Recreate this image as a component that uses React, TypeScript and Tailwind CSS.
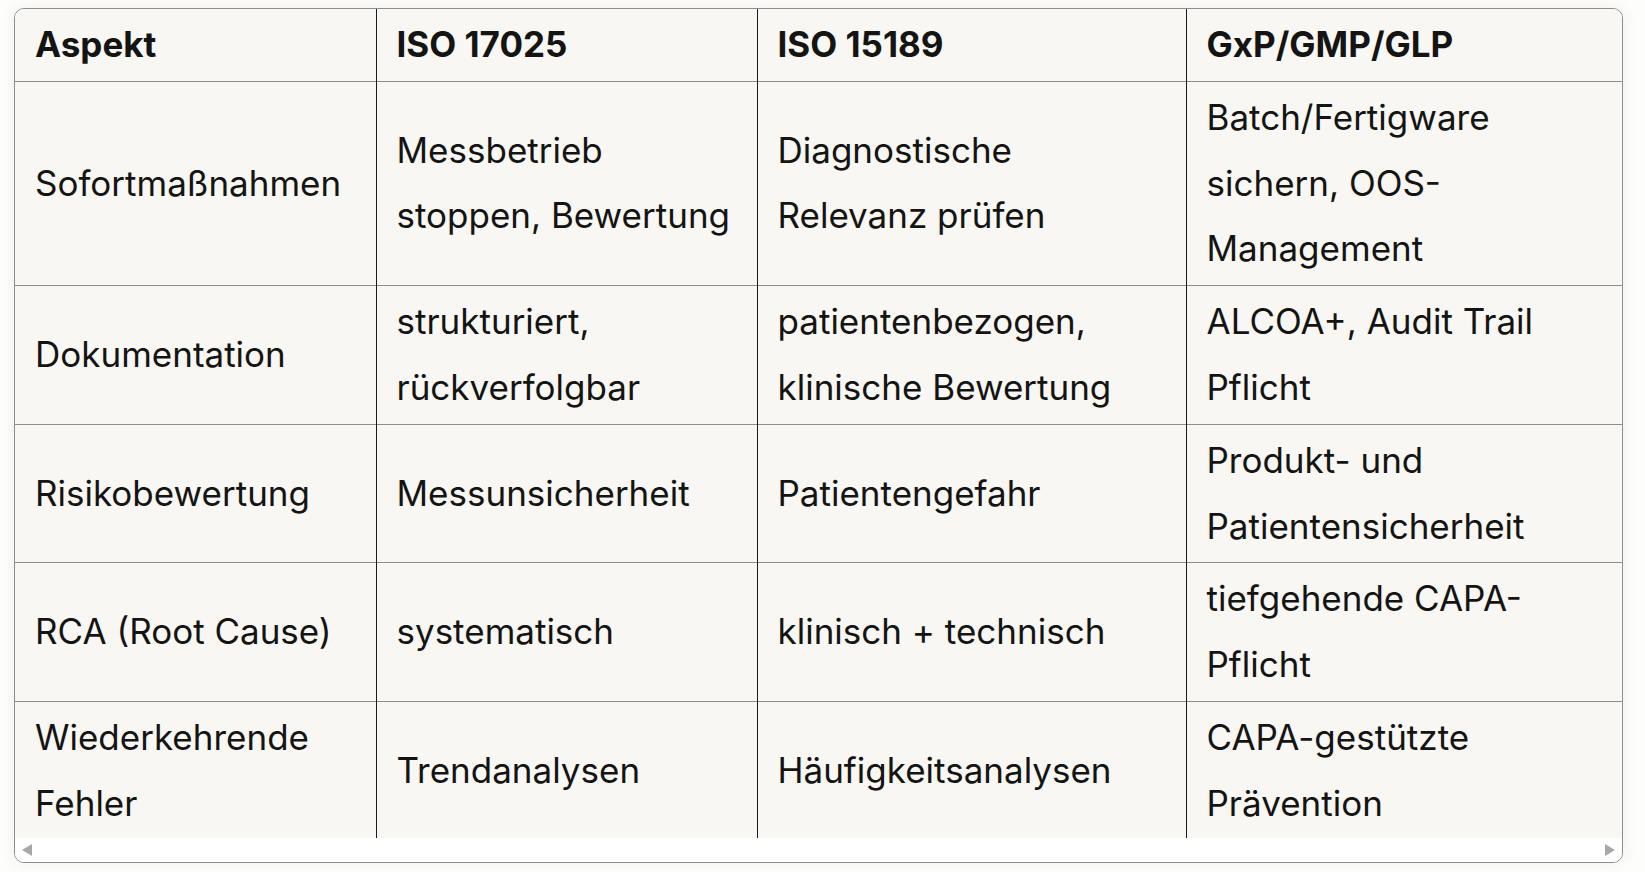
const rows: string[][] = [
  ["Sofortmaßnahmen", "Messbetrieb stoppen, Bewertung", "Diagnostische Relevanz prüfen", "Batch/Fertigware sichern, OOS-Management"],
  ["Dokumentation", "strukturiert, rückverfolgbar", "patientenbezogen, klinische Bewertung", "ALCOA+, Audit Trail Pflicht"],
  ["Risikobewertung", "Messunsicherheit", "Patientengefahr", "Produkt- und Patientensicherheit"],
  ["RCA (Root Cause)", "systematisch", "klinisch + technisch", "tiefgehende CAPA-Pflicht"],
  ["Wiederkehrende Fehler", "Trendanalysen", "Häufigkeitsanalysen", "CAPA-gestützte Prävention"],
];

const headers = ["Aspekt", "ISO 17025", "ISO 15189", "GxP/GMP/GLP"];

export default function App() {
  return (
    <div className="w-[1645px] h-[872px] bg-[#fdfdfc] pt-[8px] pl-[14px]" style={{ fontFamily: "Inter, 'Noto Sans', sans-serif" }}>
      <div className="w-[1609px] h-[855px] flex flex-col rounded-[10px] border border-[#8e8e8e] overflow-hidden bg-white shadow-[0_0_18px_rgba(0,0,0,0.06)]">
        <div className="h-[829px] overflow-hidden bg-[#f8f7f3]">
          <table className="w-full border-collapse table-fixed text-[35px] leading-[65.8px] text-[#141413]">
            <colgroup>
              <col className="w-[361px]" />
              <col className="w-[381px]" />
              <col className="w-[429px]" />
              <col />
            </colgroup>
            <thead>
              <tr className="border-b border-[#8e8e8e]">
                {headers.map((h, i) => (
                  <th
                    key={h}
                    className={`text-left font-bold px-[20px] py-[3px] ${i > 0 ? "border-l border-[#1c1c1c]" : ""}`}
                  >
                    {h}
                  </th>
                ))}
              </tr>
            </thead>
            <tbody>
              {rows.map((r) => (
                <tr key={r[0]} className="border-b border-[#8e8e8e]">
                  {r.map((c, i) => (
                    <td
                      key={i}
                      className={`align-middle px-[20px] py-[3px] ${i > 0 ? "border-l border-[#1c1c1c]" : ""}`}
                    >
                      {c}
                    </td>
                  ))}
                </tr>
              ))}
            </tbody>
          </table>
        </div>
        {/* horizontal scrollbar */}
        <div className="flex-1 flex items-center justify-between px-[6px] bg-white">
          <svg width="12" height="14" viewBox="0 0 12 14">
            <polygon points="11,1 11,13 1,7" fill="#a8a8a8" />
          </svg>
          <svg width="12" height="14" viewBox="0 0 12 14">
            <polygon points="1,1 1,13 11,7" fill="#a8a8a8" />
          </svg>
        </div>
      </div>
    </div>
  );
}
